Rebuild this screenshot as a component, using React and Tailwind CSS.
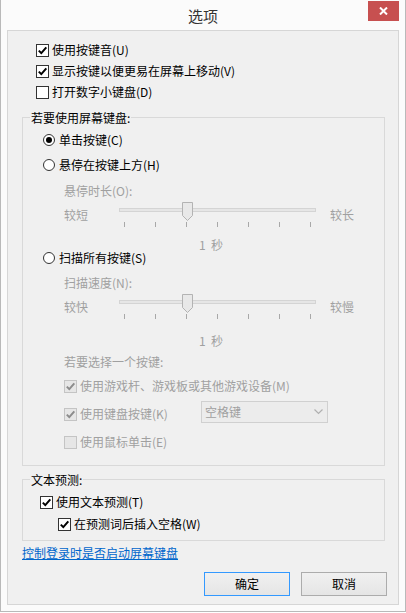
import React from "react";

const DIS = "text-[#a0a0a0]";

function Check({ checked, disabled, label, className = "" }) {
  return (
    <div className={`flex items-center h-[14px] ${className}`}>
      <div
        className={`w-[13px] h-[13px] border flex items-center justify-center shrink-0 ${
          disabled ? "border-[#c4c4c4] bg-[#e6e6e6]" : "border-[#333333] bg-white"
        }`}
      >
        {checked && (
          <svg width="11" height="11" viewBox="0 0 11 11">
            <path
              d="M1.8 5.6 L4.3 8.1 L9.3 2.4"
              fill="none"
              stroke={disabled ? "#8c8c8c" : "#000"}
              strokeWidth="2"
            />
          </svg>
        )}
      </div>
      <span className={`ml-[3px] leading-[14px] whitespace-nowrap ${disabled ? DIS : "text-black"}`}>
        {label}
      </span>
    </div>
  );
}

function Radio({ checked, label, className = "" }) {
  return (
    <div className={`flex items-center h-[14px] ${className}`}>
      <div className="w-[12px] h-[12px] rounded-full border border-[#333333] bg-white flex items-center justify-center shrink-0">
        {checked && <div className="w-[6px] h-[6px] rounded-full bg-black" />}
      </div>
      <span className="ml-[4px] leading-[14px] whitespace-nowrap text-black">{label}</span>
    </div>
  );
}

function Slider({ left, right, className = "" }) {
  const ticks = [0, 1, 2, 3, 4, 5, 6];
  return (
    <div className={`flex h-[25px] pl-[41px] ${DIS} ${className}`}>
      <div className="w-[55px] pt-[5px] leading-[16px]">{left}</div>
      <div className="relative w-[197px]">
        <div className="mt-[6px] h-[4px] border border-[#d4d4d4] bg-[#e6e6e6]" />
        <div className="mt-[10px] flex justify-between px-[5px]">
          {ticks.map((t) => (
            <div key={t} className="w-px h-[5px] bg-[#a8a8a8]" />
          ))}
        </div>
        <svg className="absolute left-[63px] top-0" width="11" height="19" viewBox="0 0 11 19">
          <path d="M0.5 0.5 H10.5 V13.5 L5.5 18.5 L0.5 13.5 Z" fill="#e8e8e8" stroke="#b3b3b3" />
        </svg>
      </div>
      <div className="ml-[14px] pt-[5px] leading-[16px]">{right}</div>
    </div>
  );
}

function GroupLabel({ children }) {
  return (
    <div className="-mt-[8px] ml-[7px] px-[1px] h-[16px] leading-[16px] w-fit bg-[#f0f0f0] text-black whitespace-nowrap">
      {children}
    </div>
  );
}

export default function App() {
  return (
    <div className="w-[406px] h-[612px] bg-[#fbfbfb] border-l border-r border-b border-[#b9b9b9] font-['Noto_Sans_CJK_SC','Noto_Sans',sans-serif] text-[12px] text-black">
      {/* title bar */}
      <div className="grid grid-cols-[1fr_auto_1fr] h-[30px]">
        <div />
        <div className="pt-[6px] text-[15px] leading-[20px] text-[#333333]">选项</div>
        <div className="flex justify-end pr-[6px] pt-[1px]">
          <div className="w-[31px] h-[20px] bg-[#c75050] flex items-center justify-center">
            <svg width="9" height="8" viewBox="0 0 9 8">
              <path d="M1 0.5 L8 7.5 M8 0.5 L1 7.5" stroke="#fff" strokeWidth="2" />
            </svg>
          </div>
        </div>
      </div>

      {/* panel */}
      <div className="ml-[6px] w-[392px] h-[575px] border border-[#d6d6d6] bg-[#f0f0f0]">
        <div className="pl-[28px] pt-[12px]">
          <Check checked label="使用按键音(U)" />
          <Check checked label="显示按键以便更易在屏幕上移动(V)" className="mt-[7px]" />
          <Check label="打开数字小键盘(D)" className="mt-[7px]" />
        </div>

        {/* group 1 */}
        <div className="mt-[18px] ml-[14px] w-[363px] border border-[#d9d9d9] pb-[16px]">
          <GroupLabel>若要使用屏幕键盘:</GroupLabel>
          <Radio checked label="单击按键(C)" className="mt-[7px] ml-[20px]" />
          <Radio label="悬停在按键上方(H)" className="mt-[11px] ml-[20px]" />
          <div className={`mt-[12px] ml-[41px] h-[14px] leading-[14px] ${DIS}`}>悬停时长(O):</div>
          <Slider left="较短" right="较长" className="mt-[4px]" />
          <div className={`mt-[11px] pl-[176px] h-[13px] leading-[13px] ${DIS}`}>1&nbsp;&nbsp;秒</div>
          <Radio label="扫描所有按键(S)" className="ml-[20px]" />
          <div className={`mt-[11px] ml-[41px] h-[14px] leading-[14px] ${DIS}`}>扫描速度(N):</div>
          <Slider left="较快" right="较慢" className="mt-[4px]" />
          <div className={`mt-[15px] pl-[176px] h-[14px] leading-[14px] ${DIS}`}>1&nbsp;&nbsp;秒</div>
          <div className={`mt-[7px] ml-[41px] h-[14px] leading-[14px] ${DIS}`}>若要选择一个按键:</div>
          <Check checked disabled label="使用游戏杆、游戏板或其他游戏设备(M)" className="mt-[10px] ml-[41px]" />
          <div className="mt-[8px] ml-[41px] flex h-[22px]">
            <div className="w-[137px] pt-[6px]">
              <Check checked disabled label="使用键盘按键(K)" />
            </div>
            <div className={`w-[127px] h-[22px] border border-[#d0d0d0] bg-[#ececec] flex items-center justify-between pl-[3px] pr-[4px] ${DIS}`}>
              <span className="leading-[14px]">空格键</span>
              <svg width="9" height="6" viewBox="0 0 9 6">
                <path d="M0.5 0.5 L4.5 4.5 L8.5 0.5" fill="none" stroke="#b0b0b0" strokeWidth="1.2" />
              </svg>
            </div>
          </div>
          <Check disabled label="使用鼠标单击(E)" className="mt-[12px] ml-[41px]" />
        </div>

        {/* group 2 */}
        <div className="mt-[13px] ml-[14px] w-[363px] border border-[#d9d9d9] pb-[9px]">
          <GroupLabel>文本预测:</GroupLabel>
          <Check checked label="使用文本预测(T)" className="mt-[7px] ml-[17px]" />
          <Check checked label="在预测词后插入空格(W)" className="mt-[8px] ml-[35px]" />
        </div>

        <div className="mt-[4px] ml-[14px] h-[16px] leading-[16px]">
          <span className="text-[#0066cc] underline">控制登录时是否启动屏幕键盘</span>
        </div>

        <div className="mt-[11px] flex justify-end gap-[11px] pr-[11px]">
          <button className="w-[86px] h-[24px] border border-[#3399ff] bg-gradient-to-b from-[#f0f0f0] to-[#e5e5e5] text-black text-[12px]">
            确定
          </button>
          <button className="w-[86px] h-[24px] border border-[#acacac] bg-gradient-to-b from-[#f0f0f0] to-[#e5e5e5] text-black text-[12px]">
            取消
          </button>
        </div>
      </div>
    </div>
  );
}
